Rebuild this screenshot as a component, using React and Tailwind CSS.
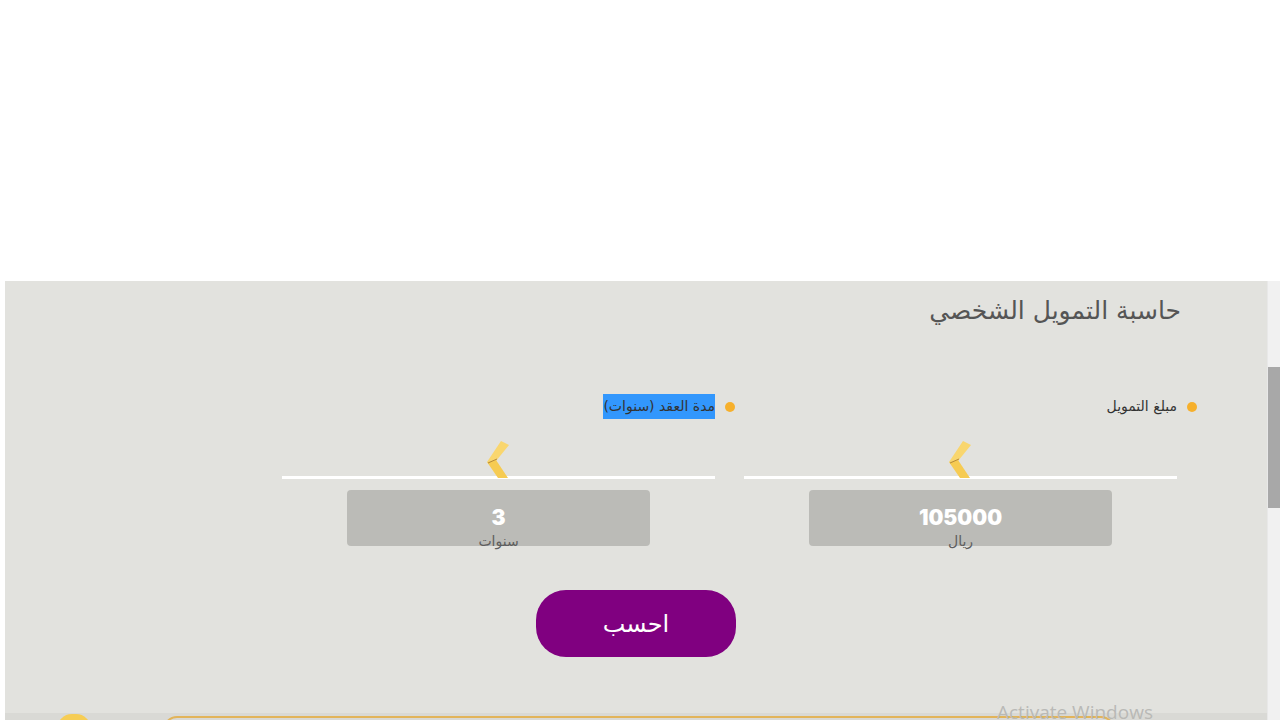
import React from 'react';

const arabic = { fontFamily: '"DejaVu Sans", "Noto Sans", sans-serif' };

function Chevron() {
  return (
    <svg width="23" height="38" viewBox="0 0 23 38" className="block">
      <polygon points="0,21 14,0 22,4 9,20" fill="#f9d66e" />
      <polygon points="0,21 9,19 21,37 11,37" fill="#f6cb52" />
      <line x1="1" y1="22" x2="10" y2="18" stroke="#b58a3a" strokeWidth="1" />
    </svg>
  );
}

function Field({ label, value, unit, selected }) {
  return (
    <div className="w-[433px] flex flex-col">
      {/* Label with bullet */}
      <div className="h-[25px] flex items-center gap-[10px] -mr-[20px]">
        <span className="w-[10px] h-[10px] rounded-full bg-[#f6b02c] shrink-0" />
        <span
          className={`text-[14px] leading-[25px] text-[#333] ${selected ? 'bg-[#3297fd]' : ''}`}
          style={arabic}
        >
          {label}
        </span>
      </div>

      {/* Slider */}
      <div className="relative h-[60px] flex flex-col">
        <div className="mt-auto h-[3px] bg-white" />
        <div className="absolute left-1/2 -translate-x-[12px] bottom-0">
          <Chevron />
        </div>
      </div>

      {/* Value box */}
      <div className="mt-[11px] mx-auto w-[303px] h-[56px] rounded-[4px] bg-[#bbbbb7] flex flex-col items-center">
        <span
          className="mt-[16px] text-[21px] leading-[24px] font-black text-white"
          style={{ fontFamily: 'Inter, "Open Sans", sans-serif' }}
        >
          {value}
        </span>
        <span className="mt-[3px] text-[14px] leading-[16px] text-[#5e5e5e]" style={arabic}>
          {unit}
        </span>
      </div>
    </div>
  );
}

export default function App() {
  return (
    <div className="relative w-[1280px] h-[720px] overflow-hidden bg-white">
      <div className="h-[281px] bg-white" />

      <div className="flex">
        <div className="w-[5px] bg-white" />

        {/* Calculator panel */}
        <div dir="rtl" className="w-[1262px] bg-[#e2e2de] flex flex-col">
          <h2
            className="pr-[86px] pt-[14px] h-[113px] text-[25px] leading-[32px] text-[#555]"
            style={arabic}
          >
            حاسبة التمويل الشخصي
          </h2>

          <div className="flex gap-[29px] pr-[90px]">
            <Field label="مبلغ التمويل" value="105000" unit="ريال" />
            <Field label="مدة العقد (سنوات)" value="3" unit="سنوات" selected />
          </div>

          <div className="flex justify-center mt-[44px]">
            <button
              className="w-[200px] h-[67px] rounded-[30px] bg-[#800080] text-white text-[24px] leading-[30px]"
              style={arabic}
            >
              احسب
            </button>
          </div>

          {/* Next section peeking in */}
          <div dir="ltr" className="mt-[56px] h-[40px] bg-[#d9d9d5] relative">
            <div className="absolute left-[52px] top-[1px] w-[34px] h-[30px] rounded-full bg-[#f6cd55]" />
            <div className="absolute left-[158px] top-[3px] w-[952px] h-[30px] rounded-[14px] border-2 border-[#e2b45a]" />
          </div>
        </div>

        {/* Scrollbar */}
        <div className="w-[13px] bg-[#f1f1f1] border-l border-[#e8e8e8] flex flex-col">
          <div className="h-[86px]" />
          <div className="h-[141px] bg-[#a8a8a8]" />
        </div>
      </div>

      <span
        className="absolute left-[997px] top-[700px] text-[19px] leading-[24px] text-[#b9b9b6]"
        style={{ fontFamily: '"Open Sans", "Liberation Sans", sans-serif' }}
      >
        Activate Windows
      </span>
    </div>
  );
}
